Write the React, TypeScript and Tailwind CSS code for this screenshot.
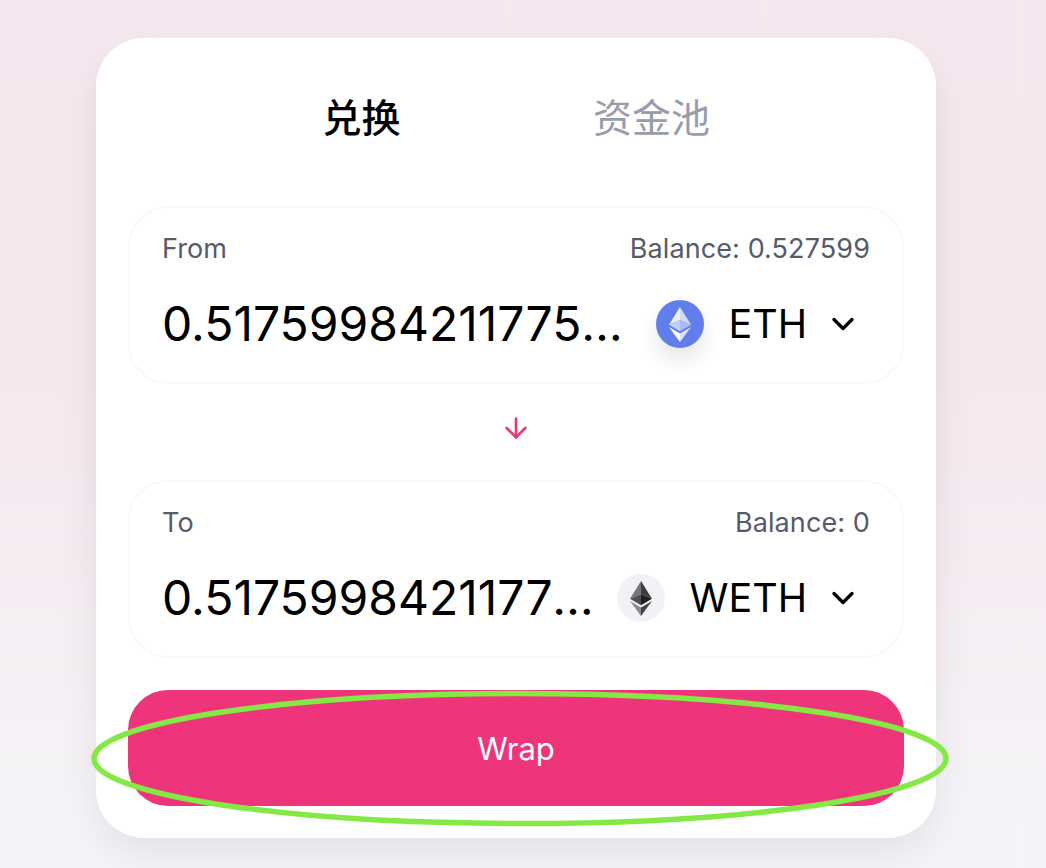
import { ChevronDown, ArrowDown } from "lucide-react";

const EthLogo = ({ dark }: { dark?: boolean }) => (
    <svg viewBox="0 0 24 38" className="w-[22px] h-[35px]">
        <path d="M12 0 L12 14 L0 19.3 Z" fill={dark ? "#767676" : "#ecf0fd"} />
        <path d="M12 0 L24 19.3 L12 14 Z" fill={dark ? "#3c3c3c" : "#d3daf8"} />
        <path d="M12 14 L0 19.3 L12 26.4 Z" fill={dark ? "#4f4f4f" : "#c5cff6"} />
        <path d="M12 14 L24 19.3 L12 26.4 Z" fill={dark ? "#1f1f1f" : "#aebbf2"} />
        <path d="M0 21.6 L12 38 L12 28.7 Z" fill={dark ? "#8a8a8a" : "#ffffff"} />
        <path d="M24 21.6 L12 38 L12 28.7 Z" fill={dark ? "#454545" : "#dfe4fa"} />
    </svg>
);

interface PanelProps {
    label: string;
    balance: string;
    amount: string;
    token: string;
    dark?: boolean;
}

const Panel = ({ label, balance, amount, token, dark }: PanelProps) => (
    <div className="h-[178px] rounded-[40px] border-2 border-[#f7f8fa] pl-[32px] pr-[32px] pt-[24px]">
        <div className="flex items-center justify-between h-[34px] text-[27px] tracking-[0.1px] leading-[34px] text-[#565a69]">
            <span>{label}</span>
            <span>{balance}</span>
        </div>
        <div className="flex items-center mt-[34px] h-[48px]">
            <span className="flex-1 min-w-0 truncate text-[48px] leading-[58px] text-black">{amount}</span>
            <div className="flex items-center flex-shrink-0 ml-[21px]">
                <div className={`w-[48px] h-[48px] rounded-full flex items-center justify-center ${dark ? "bg-[#f1f2f6]" : "bg-[#627eea] shadow-[0_12px_20px_rgba(0,0,0,0.1)]"}`}>
                    <EthLogo dark={dark} />
                </div>
                <span className="ml-[24px] text-[39.5px] leading-[48px] text-black">{token}</span>
                <ChevronDown className="w-[36px] h-[36px] ml-[18px] mr-[9px] text-black" strokeWidth={2.2} />
            </div>
        </div>
    </div>
);

const App = () => {
    return (
        <div className="relative w-full h-[868px] overflow-hidden bg-gradient-to-b from-[#f6e8ef] from-45% to-[#f5f4f8] to-95% pt-[38px] font-['Inter','Noto_Sans_CJK_SC',sans-serif]">
            <div className="w-[840px] h-[800px] ml-[96px] bg-white rounded-[48px] px-[32px] shadow-[0_16px_40px_rgba(0,0,0,0.08)]">
                {/* Tabs */}
                <div className="flex items-center justify-center h-[168px] text-[39px] pb-[8px] pr-[20px]">
                    <span className="w-[291px] pl-[2px] text-center font-medium text-black">兑换</span>
                    <span className="w-[291px] text-center text-[#989cac]">资金池</span>
                </div>

                <Panel label="From" balance="Balance: 0.527599" amount="0.51759984211775951" token="ETH" />

                <div className="flex items-center justify-center h-[96px] pb-[8px]">
                    <ArrowDown className="w-[32px] h-[32px] text-[#ef3579]" strokeWidth={2} />
                </div>

                <Panel label="To" balance="Balance: 0" amount="0.51759984211775951" token="WETH" dark />

                <button className="w-full h-[116px] mt-[32px] pt-[2px] rounded-[40px] bg-[#ee357b] text-white text-[31px]">Wrap</button>
            </div>

            {/* hand-drawn highlight */}
            <svg className="absolute left-0 top-0 pointer-events-none" width="1046" height="868" fill="none">
                <ellipse cx="520" cy="758.5" rx="426" ry="65" stroke="#84e845" strokeWidth="5.5" />
            </svg>
        </div>
    );
};

export default App;
